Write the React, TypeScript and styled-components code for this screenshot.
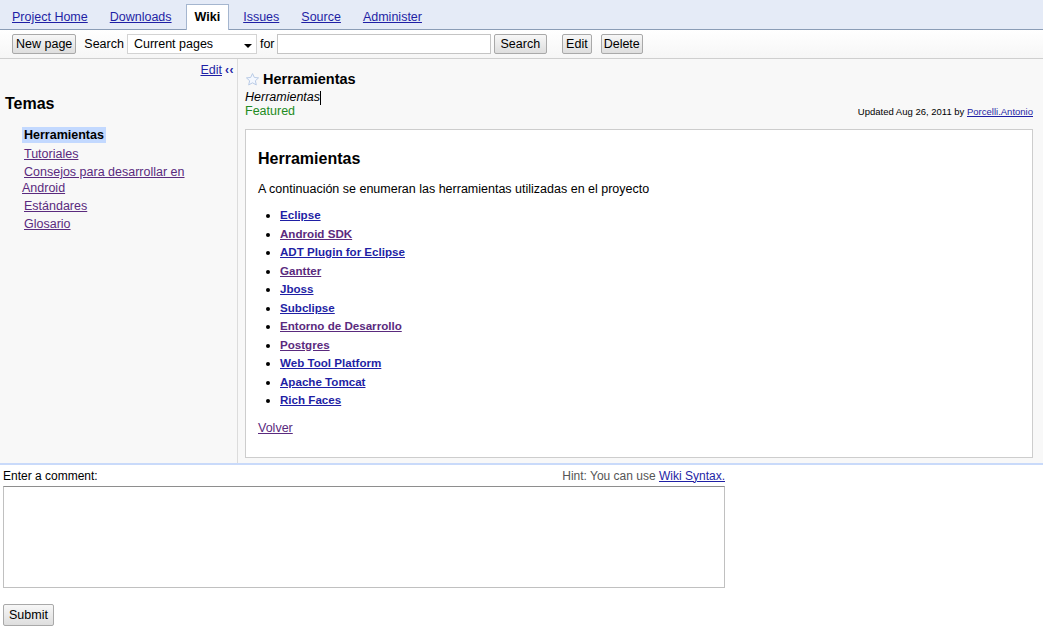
import React from "react";
import styled, { createGlobalStyle } from "styled-components";

const GlobalStyle = createGlobalStyle`
  html, body {
    margin: 0;
    padding: 0;
    background: #ffffff;
  }
  body {
    font-family: "Liberation Sans", Arial, sans-serif;
    font-size: 12.5px;
    color: #000;
  }
`;

const Page = styled.div`
  width: 1043px;
  min-height: 632px;
`;

const TabBar = styled.div`
  display: flex;
  align-items: flex-end;
  height: 29px;
  padding-left: 4px;
  gap: 6px;
  background: #e5ebf7;
  border-bottom: 1px solid #8a9cb6;
`;

const Tab = styled.a<{ $active?: boolean }>`
  display: block;
  padding: 0 ${(p) => (p.$active ? "8px" : "7px")};
  height: ${(p) => (p.$active ? "25px" : "24px")};
  line-height: 24px;
  margin-bottom: ${(p) => (p.$active ? "-1px" : "0")};
  font-size: 12.5px;
  color: ${(p) => (p.$active ? "#000" : "#1f1fa5")};
  font-weight: ${(p) => (p.$active ? "bold" : "normal")};
  text-decoration: ${(p) => (p.$active ? "none" : "underline")};
  background: ${(p) => (p.$active ? "#ffffff" : "transparent")};
  border: 1px solid ${(p) => (p.$active ? "#a5b6cf" : "transparent")};
  border-bottom: none;
  cursor: pointer;
`;

const Toolbar = styled.div`
  display: flex;
  align-items: center;
  height: 28px;
  padding-left: 12px;
  background: linear-gradient(#ffffff, #f6f6f6);
  border-bottom: 1px solid #cfcfcf;
`;

const Button = styled.button<{ $gap?: number; $pad?: number; $tall?: boolean }>`
  height: ${(p) => (p.$tall ? "22px" : "20px")};
  padding: 0 ${(p) => p.$pad ?? 3}px;
  margin-right: ${(p) => p.$gap ?? 0}px;
  font-family: "Liberation Sans", Arial, sans-serif;
  font-size: 12.5px;
  color: #000;
  background: linear-gradient(#f7f7f7, #dedede);
  border: 1px solid #a9a9a9;
  border-radius: 2px;
`;

const Label = styled.span<{ $left?: number; $right?: number }>`
  margin: 0 ${(p) => p.$right ?? 4}px 0 ${(p) => p.$left ?? 0}px;
  font-size: 12.5px;
`;

const Select = styled.div`
  display: flex;
  align-items: center;
  justify-content: space-between;
  box-sizing: border-box;
  width: 130px;
  height: 20px;
  padding: 0 4px 0 6px;
  background: #fff;
  border: 1px solid #d3d3d3;
  font-size: 12.5px;
`;

const Arrow = styled.span`
  width: 0;
  height: 0;
  border-left: 4px solid transparent;
  border-right: 4px solid transparent;
  border-top: 4px solid #000;
  margin-top: 3px;
`;

const TextInput = styled.input`
  box-sizing: border-box;
  width: 214px;
  height: 20px;
  margin-right: 3px;
  border: 1px solid #c4c4c4;
`;

const Body = styled.div`
  display: flex;
  background: #f8f8f8;
  border-bottom: 2px solid #c9dafa;
`;

const Sidebar = styled.div`
  width: 237px;
  flex-shrink: 0;
  border-right: 1px solid #dcdcdc;
`;

const SideTop = styled.div`
  display: flex;
  justify-content: flex-end;
  align-items: center;
  padding: 3px 3px 0 0;
  line-height: 16px;
`;

const Link = styled.a<{ $visited?: boolean; $bold?: boolean }>`
  color: ${(p) => (p.$visited ? "#5a2a7e" : "#1f1fa5")};
  font-weight: ${(p) => (p.$bold ? "bold" : "normal")};
  text-decoration: underline;
  cursor: pointer;
`;

const Collapse = styled.span`
  margin-left: 3px;
  color: #1f1fa5;
  font-weight: bold;
  font-size: 12px;
  letter-spacing: 0.5px;
`;

const SideTitle = styled.h3`
  margin: 16px 0 0 5px;
  font-size: 16px;
  line-height: 20px;
  font-weight: bold;
`;

const NavList = styled.ul`
  list-style: none;
  margin: 13px 0 0 22px;
  padding: 0;
  width: 180px;
`;

const NavItem = styled.li<{ $current?: boolean }>`
  line-height: 16px;
  margin-bottom: ${(p) => (p.$current ? 3 : 2)}px;
  text-indent: 2px;
  font-size: 12.5px;

  span {
    margin-left: -2px;
    padding: 1px 2px;
    background: #c3d9ff;
    font-weight: bold;
  }
`;

const Main = styled.div`
  flex: 1;
  padding: 11px 10px 5px 7px;
`;

const TitleRow = styled.div`
  display: flex;
  align-items: center;
  gap: 3px;
  margin-bottom: 2px;
  font-size: 14.5px;
  font-weight: bold;
  line-height: 18px;
`;

const Summary = styled.div`
  font-style: italic;
  line-height: 15px;
  display: flex;
  align-items: center;
`;

const Caret = styled.span`
  display: inline-block;
  width: 1px;
  height: 14px;
  background: #000;
`;

const MetaRow = styled.div`
  display: flex;
  justify-content: space-between;
  align-items: baseline;
  line-height: 13px;
`;

const Featured = styled.span`
  color: #228b22;
`;

const Updated = styled.span`
  font-size: 9.5px;
  color: #000;
`;

const ContentBox = styled.div`
  margin-top: 11px;
  padding: 19px 12px 21px;
  background: #fff;
  border: 1px solid #cdcdcd;
`;

const Heading = styled.h2`
  margin: 0;
  font-size: 16px;
  line-height: 20px;
  font-weight: bold;
`;

const Paragraph = styled.p`
  margin: 12px 0 0;
  line-height: 16px;
`;

const ToolList = styled.ul`
  margin: 9px 0 0;
  padding-left: 22px;
`;

const ToolItem = styled.li`
  line-height: 18.5px;
  font-size: 11.6px;
`;

const Back = styled.div`
  margin-top: 10px;
  line-height: 16px;
`;

const CommentArea = styled.div`
  width: 722px;
  padding: 4px 0 0 3px;
`;

const CommentHead = styled.div`
  display: flex;
  justify-content: space-between;
  line-height: 14px;
  font-size: 12px;
`;

const Hint = styled.span`
  color: #555;
`;

const TextArea = styled.textarea`
  display: block;
  box-sizing: border-box;
  width: 722px;
  height: 102px;
  margin-top: 3px;
  border: 1px solid #c0c0c0;
  border-top-color: #8e8e8e;
  resize: none;
`;

const SubmitRow = styled.div`
  margin-top: 16px;
`;

const Star = () => (
  <svg width="15" height="15" viewBox="0 0 24 24">
    <path
      d="M12 2.5l2.9 6.2 6.8.7-5.1 4.6 1.5 6.7L12 17.3l-6.1 3.4 1.5-6.7-5.1-4.6 6.8-.7z"
      fill="#f4f8ff"
      stroke="#b9cbe6"
      strokeWidth="1.6"
      strokeLinejoin="round"
    />
  </svg>
);

const tabs = ["Project Home", "Downloads", "Wiki", "Issues", "Source", "Administer"];

const navItems = [
  "Tutoriales",
  "Consejos para desarrollar en Android",
  "Estándares",
  "Glosario",
];

const tools = [
  { name: "Eclipse", visited: false },
  { name: "Android SDK", visited: true },
  { name: "ADT Plugin for Eclipse", visited: false },
  { name: "Gantter", visited: true },
  { name: "Jboss", visited: false },
  { name: "Subclipse", visited: false },
  { name: "Entorno de Desarrollo", visited: true },
  { name: "Postgres", visited: true },
  { name: "Web Tool Platform", visited: false },
  { name: "Apache Tomcat", visited: false },
  { name: "Rich Faces", visited: false },
];

export default function App() {
  return (
    <Page>
      <GlobalStyle />
      <TabBar>
        {tabs.map((t) => (
          <Tab key={t} $active={t === "Wiki"}>
            {t}
          </Tab>
        ))}
      </TabBar>

      <Toolbar>
        <Button>New page</Button>
        <Label $left={8} $right={3}>Search</Label>
        <Select>
          Current pages
          <Arrow />
        </Select>
        <Label $left={3} $right={2}>for</Label>
        <TextInput />
        <Button $gap={15} $pad={6}>Search</Button>
        <Button $gap={9}>Edit</Button>
        <Button $pad={2}>Delete</Button>
      </Toolbar>

      <Body>
        <Sidebar>
          <SideTop>
            <Link>Edit</Link>
            <Collapse>‹‹</Collapse>
          </SideTop>
          <SideTitle>Temas</SideTitle>
          <NavList>
            <NavItem $current>
              <span>Herramientas</span>
            </NavItem>
            {navItems.map((n) => (
              <NavItem key={n}>
                <Link $visited>{n}</Link>
              </NavItem>
            ))}
          </NavList>
        </Sidebar>

        <Main>
          <TitleRow>
            <Star />
            Herramientas
          </TitleRow>
          <Summary>
            Herramientas
            <Caret />
          </Summary>
          <MetaRow>
            <Featured>Featured</Featured>
            <Updated>
              Updated Aug 26, 2011 by <Link>Porcelli.Antonio</Link>
            </Updated>
          </MetaRow>

          <ContentBox>
            <Heading>Herramientas</Heading>
            <Paragraph>
              A continuación se enumeran las herramientas utilizadas en el proyecto
            </Paragraph>
            <ToolList>
              {tools.map((t) => (
                <ToolItem key={t.name}>
                  <Link $bold $visited={t.visited}>
                    {t.name}
                  </Link>
                </ToolItem>
              ))}
            </ToolList>
            <Back>
              <Link $visited>Volver</Link>
            </Back>
          </ContentBox>
        </Main>
      </Body>

      <CommentArea>
        <CommentHead>
          <span>Enter a comment:</span>
          <Hint>
            Hint: You can use <Link>Wiki Syntax.</Link>
          </Hint>
        </CommentHead>
        <TextArea />
        <SubmitRow>
          <Button $tall $pad={5}>Submit</Button>
        </SubmitRow>
      </CommentArea>
    </Page>
  );
}
